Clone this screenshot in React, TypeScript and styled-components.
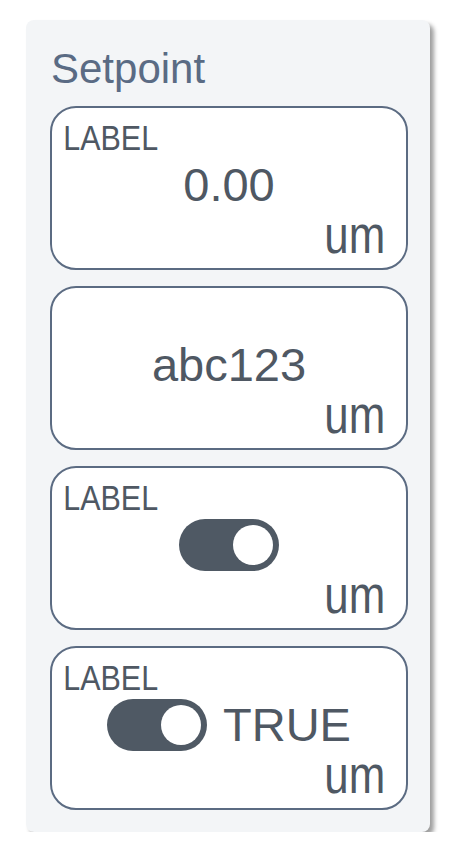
import * as React from 'react';
import styled, { createGlobalStyle } from 'styled-components';

const GlobalStyle = createGlobalStyle`
  body {
    margin: 0;
    background: #fff;
    font-family: "Liberation Sans", Arial, sans-serif;
  }
`;

const StyledPanel = styled.div`
  display: flex;
  flex-direction: column;
  gap: 16px;
  box-sizing: border-box;
  width: 404px;
  margin: 20px 0 0 26px;
  padding: 25px 22px 22px 24px;
  border-radius: 8px;
  background-color: #f3f5f7;
  box-shadow: 4px 4px 4px rgba(0, 0, 0, 0.38);
`;

const StyledTitle = styled.div`
  margin: 0 0 -3px 1px;
  font-size: 42px;
  line-height: 48px;
  color: #5a6b84;
`;

const StyledCard = styled.div`
  display: grid;
  grid-template-rows: 37px 52px 1fr;
  box-sizing: border-box;
  height: 164px;
  padding-top: 14px;
  border: 2px solid #5b6b82;
  border-radius: 26px;
  background-color: #fff;
  color: #4f5863;
`;

// the reference face is narrower than Arial, so squeeze it a little
const StyledLabel = styled.div`
  padding-left: 13px;
  font-size: 35px;
  line-height: 32px;
  transform: scaleX(0.87);
  transform-origin: left center;
`;

const StyledValueRow = styled.div`
  justify-content: center;
  align-items: center;
  display: flex;
  gap: 16px;
  font-size: 47px;
  line-height: 52px;
`;

const StyledUnit = styled.div`
  align-self: end;
  justify-self: end;
  padding: 0 24px 12px 0;
  font-size: 51px;
  line-height: 50px;
  transform: scaleX(0.86);
  transform-origin: right center;
`;

const StyledToggle = styled.div<{ $on: boolean }>`
  justify-content: ${(p) => (p.$on ? 'flex-end' : 'flex-start')};
  align-items: center;
  display: flex;
  box-sizing: border-box;
  width: 100px;
  height: 52px;
  padding: 0 6px;
  border-radius: 26px;
  background-color: #4f5964;

  &::after {
    content: '';
    width: 40px;
    height: 40px;
    border-radius: 50%;
    background-color: #fff;
  }
`;

interface CardProps {
  label?: string;
  unit: string;
  children: React.ReactNode;
}

const Card: React.FC<CardProps> = ({ label, unit, children }) => (
  <StyledCard>
    <StyledLabel>{label}</StyledLabel>
    <StyledValueRow>{children}</StyledValueRow>
    <StyledUnit>{unit}</StyledUnit>
  </StyledCard>
);

export default function App() {
  return (
    <>
      <GlobalStyle />
      <StyledPanel>
        <StyledTitle>Setpoint</StyledTitle>
        <Card label="LABEL" unit="um">
          0.00
        </Card>
        <Card unit="um">abc123</Card>
        <Card label="LABEL" unit="um">
          <StyledToggle $on />
        </Card>
        <Card label="LABEL" unit="um">
          <StyledToggle $on />
          <span>TRUE</span>
        </Card>
      </StyledPanel>
    </>
  );
}
